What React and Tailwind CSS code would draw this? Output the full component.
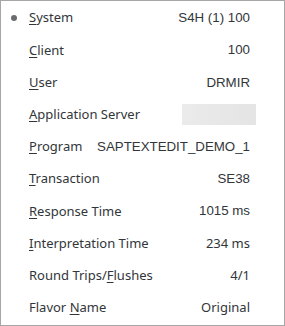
import React from 'react';

const rows = [
    { label: 'System', key: 0, value: 'S4H (1) 100', active: true },
    { label: 'Client', key: 0, value: '100' },
    { label: 'User', key: 0, value: 'DRMIR' },
    { label: 'Application Server', key: 0, blank: true },
    { label: 'Program', key: 0, value: 'SAPTEXTEDIT_DEMO_1' },
    { label: 'Transaction', key: 0, value: 'SE38' },
    { label: 'Response Time', key: 0, value: '1015 ms' },
    { label: 'Interpretation Time', key: 0, value: '234 ms', humanist: true },
    { label: 'Round Trips/Flushes', key: 12, value: '4/1', humanist: true },
    { label: 'Flavor Name', key: 7, value: 'Original', humanist: true },
];

const Label = ({ text, at }) => (
    <span>
        {text.slice(0, at)}
        <span className="underline underline-offset-2">{text[at]}</span>
        {text.slice(at + 1)}
    </span>
);

export default function App() {
    return (
        <div className="w-[285px] h-[326px] bg-white border border-[#a6a6a6] flex flex-col py-[1px] text-[#32363a] text-[13px] font-['Noto_Sans',sans-serif]">
            {rows.map((r, i) => (
                <div key={i} className="flex-1 flex items-center pl-[28px] pr-[34px] relative">
                    {r.active && (
                        <span className="absolute left-[10px] w-[6px] h-[6px] rounded-full bg-[#6a6d70]" />
                    )}
                    <Label text={r.label} at={r.key} />
                    <div className="flex-1" />
                    {r.blank ? (
                        <div className="w-[74px] h-[21px] mr-[-6px] bg-gradient-to-r from-[#ebebeb] to-[#e4e4e4]" />
                    ) : (
                        <span className={r.humanist ? '' : "font-['Liberation_Sans',sans-serif] text-[13.3px]"}>{r.value}</span>
                    )}
                </div>
            ))}
        </div>
    );
}
